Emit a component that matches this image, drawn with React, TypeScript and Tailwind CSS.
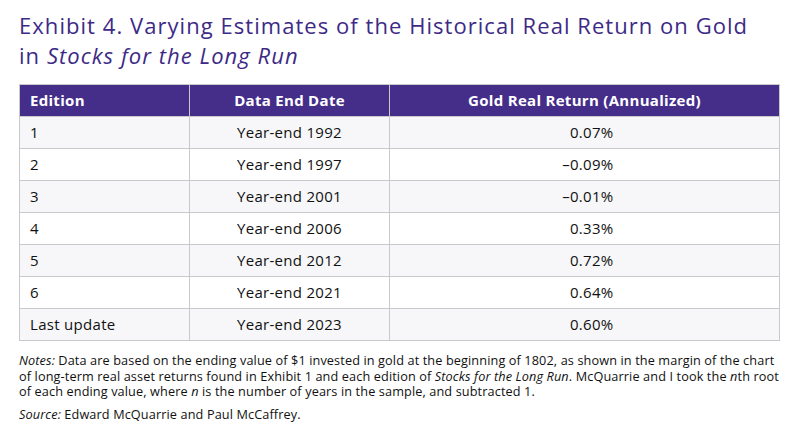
const rows = [
  ["1", "Year-end 1992", "0.07%"],
  ["2", "Year-end 1997", "–0.09%"],
  ["3", "Year-end 2001", "–0.01%"],
  ["4", "Year-end 2006", "0.33%"],
  ["5", "Year-end 2012", "0.72%"],
  ["6", "Year-end 2021", "0.64%"],
  ["Last update", "Year-end 2023", "0.60%"],
];

export default function App() {
  return (
    <div className="w-[800px] h-[433px] bg-white px-[19px] pt-[10px] font-['Open_Sans','Noto_Sans',sans-serif] text-[#111]">
      <h1 className="text-[22px] leading-[30px] tracking-[1.05px] text-[#3d2a86]">
        Exhibit 4. Varying Estimates of the Historical Real Return on Gold
        <br />
        in <i>Stocks for the Long Run</i>
      </h1>
      <table className="mt-[14px] w-[761px] border-collapse text-[15px] tracking-[0.3px] border border-[#c9c9cc] table-fixed">
        <colgroup>
          <col className="w-[170px]" />
          <col className="w-[200px]" />
          <col />
        </colgroup>
        <thead>
          <tr className="h-[32px] bg-[#452d8a] text-white font-bold">
            <th className="border border-[#c9c9cc] text-left pl-[10px]">Edition</th>
            <th className="border border-[#c9c9cc] text-center">Data End Date</th>
            <th className="border border-[#c9c9cc] text-center">Gold Real Return (Annualized)</th>
          </tr>
        </thead>
        <tbody>
          {rows.map((r, i) => (
            <tr key={i} className={"h-[32px] " + (i % 2 === 0 ? "bg-[#f7f7f9]" : "bg-white")}>
              <td className="border border-[#c9c9cc] pl-[10px]">{r[0]}</td>
              <td className="border border-[#c9c9cc] text-center">{r[1]}</td>
              <td className="border border-[#c9c9cc] text-center">
                <span className="inline-block w-[58px] text-right">{r[2]}</span>
              </td>
            </tr>
          ))}
        </tbody>
      </table>
      <p className="mt-[12px] text-[12.7px] leading-[15.5px] tracking-[0.12px] text-[#111]">
        <i>Notes:</i> Data are based on the ending value of $1 invested in gold at the beginning of 1802, as shown in the margin of the chart of long-term real asset returns found in Exhibit 1 and each edition of <i>Stocks for the Long Run</i>. McQuarrie and I took the <i>n</i>th root of each ending value, where <i>n</i> is the number of years in the sample, and subtracted 1.
      </p>
      <p className="mt-[7px] text-[12.7px] leading-[15.5px] tracking-[0.12px] text-[#111]">
        <i>Source:</i> Edward McQuarrie and Paul McCaffrey.
      </p>
    </div>
  );
}
